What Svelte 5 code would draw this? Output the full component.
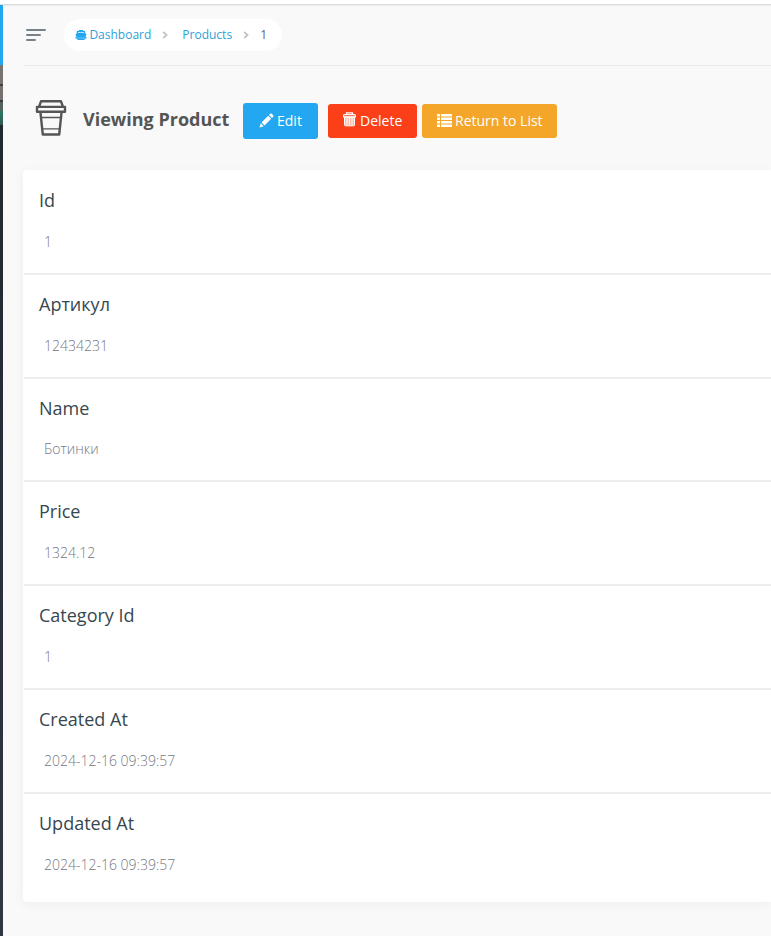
<script>
  const fields = [
    { label: 'Id', value: '1' },
    { label: 'Артикул', value: '12434231' },
    { label: 'Name', value: 'Ботинки' },
    { label: 'Price', value: '1324.12' },
    { label: 'Category Id', value: '1' },
    { label: 'Created At', value: '2024-12-16 09:39:57' },
    { label: 'Updated At', value: '2024-12-16 09:39:57' }
  ];
</script>

<div class="page">
  <div class="topline"></div>
  <div class="shell">
    <aside class="sidebar">
      <div class="brand"></div>
      <div class="photo"></div>
    </aside>
    <main>
      <nav>
        <button class="menu" aria-label="Menu">
          <svg width="20" height="13" viewBox="0 0 20 13" fill="none" stroke="#76838a" stroke-width="2" stroke-linecap="round">
            <path d="M1 1h18M1 6h13M1 11h8" />
          </svg>
        </button>
        <ol class="crumbs">
          <li>
            <a href="#dashboard">
              <svg class="boat" width="12" height="12" viewBox="0 0 12 12">
                <path fill="#22a7f0" fill-rule="evenodd" d="M4 .9h4v.9h1.3q1 0 1 1v1.8l1.2.7-.9 2.7h.9v1.5h-1.1q-.5 1.4-1.7 1.5H3.3Q2.100 10.900 1.600 9.500H.5V8h.9L.5 5.300l1.200-.7V2.800q0-1 1-1H4zM3.200 3v1.100L6 3.500l2.800.6V3z" />
                <path d="M1.600 8.800q1.100.7 2.200 0 1.100.7 2.200 0 1.100.7 2.200 0 1.100.7 2.200 0" fill="none" stroke="#fff" stroke-width=".5" stroke-opacity=".7" />
              </svg>Dashboard</a>
          </li>
          <li class="sep"><svg width="6" height="8" viewBox="0 0 6 8"><path d="M1.2 1 4.6 4 1.2 7" fill="none" stroke="#c3c3c3" stroke-width="1.7" /></svg></li>
          <li><a href="#products">Products</a></li>
          <li class="sep second"><svg width="6" height="8" viewBox="0 0 6 8"><path d="M1.2 1 4.6 4 1.2 7" fill="none" stroke="#c3c3c3" stroke-width="1.7" /></svg></li>
          <li class="current">1</li>
        </ol>
      </nav>

      <header>
        <svg class="cup" width="34" height="38" viewBox="0 0 34 38" fill="none" stroke="#555" stroke-width="2.4" stroke-linejoin="round">
          <path d="M5 7.900 7 2.300h20l2 5.600M3 7.900h28v4.900H3zM6.400 12.800l2.400 22.700h16.400l2.400-22.700" />
          <path d="M7 18.500h20M8.300 29.900h17.400" stroke-width="1.3" />
        </svg>
        <h1>Viewing Product</h1>
        <button class="btn edit">
          <svg width="15" height="15" viewBox="0 0 15 15" fill="#fff">
            <path d="M.5 14.5 1.7 10.3 4.7 13.3zM2.5 9.5 9.2 2.8 12.2 5.8 5.5 12.5zM10 2l1.2-1.2q.8-.6 1.6 0l1.4 1.4q.6.8 0 1.6L13 5z" />
          </svg>Edit
        </button>
        <button class="btn delete">
          <svg width="13" height="15" viewBox="0 0 13 15" fill="none" stroke="#fff">
            <path d="M3.5 2.5V.8h6v1.7M.6 4.8V3.6q0-1 1-1h9.8q1 0 1 1v1.2z" stroke-width="1.2" />
            <path d="M1.5 5h10v7.8q0 1-1 1h-8q-1 0-1-1z" fill="#fff" fill-opacity=".65" />
            <path d="M4 6v6.5M6.5 6v6.5M9 6v6.5" />
          </svg>Delete
        </button>
        <button class="btn list">
          <svg width="15" height="13" viewBox="0 0 15 13" fill="#fff">
            <path d="M0 0h3v2.4H0zm4 0h11v2.4H4zM0 3.5h3v2.4H0zm4 0h11v2.4H4zM0 7h3v2.4H0zm4 0h11v2.4H4zM0 10.5h3v2.4H0zm4 0h11v2.4H4z" />
          </svg>Return to List
        </button>
      </header>

      <section class="card">
        {#each fields as field}
          <div class="field">
            <h3>{field.label}</h3>
            <p>{field.value}</p>
          </div>
        {/each}
      </section>
    </main>
  </div>
</div>

<style>
  :global(body) { margin: 0; }
  .page {
    height: 936px;
    overflow: hidden;
    display: flex;
    flex-direction: column;
    background: #f9f9f9;
    font-family: "Open Sans", "Noto Sans", sans-serif;
  }
  .topline {
    height: 4px;
    flex: none;
    background: #fff;
    border-bottom: 1px solid #dcdcdc;
    box-shadow: 0 1px 1px #eee;
  }
  .shell { display: flex; flex: 1; min-height: 0; }
  .sidebar { width: 3px; flex: none; background: linear-gradient(#20262d, #303742); }
  .brand { height: 60px; background: #22a7f0; }
  .photo {
    height: 60px;
    background: linear-gradient(#77736f 0 19px, #45413f 19px 21px, #74716e 21px 35px, #393b39 35px 37px, #55625c 37px 44px, #2b7561 48px, #31594f);
  }
  main { flex: 1; min-width: 0; padding-left: 20px; }
  nav {
    height: 60px;
    display: flex;
    align-items: center;
    border-bottom: 1px solid #ececec;
  }
  button { border: 0; font-family: inherit; }
  .menu { background: none; padding: 0; margin-left: 3px; width: 20px; height: 13px; display: flex; }
  .crumbs {
    margin: 0 0 0 18px;
    padding: 0 15px 0 11px;
    height: 32px;
    box-sizing: border-box;
    width: 218px;
    display: flex;
    align-items: center;
    list-style: none;
    background: #fff;
    border-radius: 16px;
    font-size: 12px;
    line-height: 16px;
    color: #666;
  }
  .crumbs li { display: flex; align-items: center; }
  .crumbs a { display: flex; align-items: center; color: #2e9fd8; text-decoration: none; }
  .boat { margin-right: 2.4px; }
  .crumbs .sep { margin: 0 14px 0 11px; }
  .crumbs .sep.second { margin: 0 11px; }
  header { display: flex; height: 104px; }
  .cup { margin: 33px 0 0 11px; flex: none; }
  h1 {
    width: 160px;
    margin: 41px 0 0 15px;
    font-size: 18px;
    line-height: 25px;
    font-weight: 700;
    color: #555;
    white-space: nowrap;
  }
  .btn {
    display: flex;
    align-items: center;
    gap: 3px;
    height: 34px;
    margin-top: 38px;
    padding: 0 0 2px 15px;
    border-radius: 3px;
    color: #fff;
    font-size: 14px;
    white-space: nowrap;
  }
  .btn svg { margin-bottom: -1px; }
  .edit { width: 75px; height: 36px; margin-top: 37px; padding-left: 16px; background: #22a7f0; }
  .delete { width: 89px; margin-left: 10px; gap: 4px; background: #fa3f19; }
  .delete svg { margin-top: -3px; }
  .list { width: 135px; margin-left: 5px; background: #f3a629; }
  .card {
    height: 732px;
    box-sizing: border-box;
    padding: 1px 0 0 1px;
    background: #fff;
    border-radius: 4px 0 0 4px;
    box-shadow: 0 2px 12px rgba(0, 0, 0, .05);
  }
  .field { height: 101.8px; padding-left: 15px; border-bottom: 2px solid #ededed; }
  .field:last-child { border: 0; }
  h3 {
    margin: 0;
    padding-top: 17px;
    font-size: 18px;
    line-height: 24px;
    font-weight: 400;
    color: #37474f;
  }
  p {
    margin: 0;
    padding: 19.8px 0 0 5px;
    font-size: 14px;
    line-height: 20px;
    font-weight: 300;
    color: #77777f;
  }
</style>
